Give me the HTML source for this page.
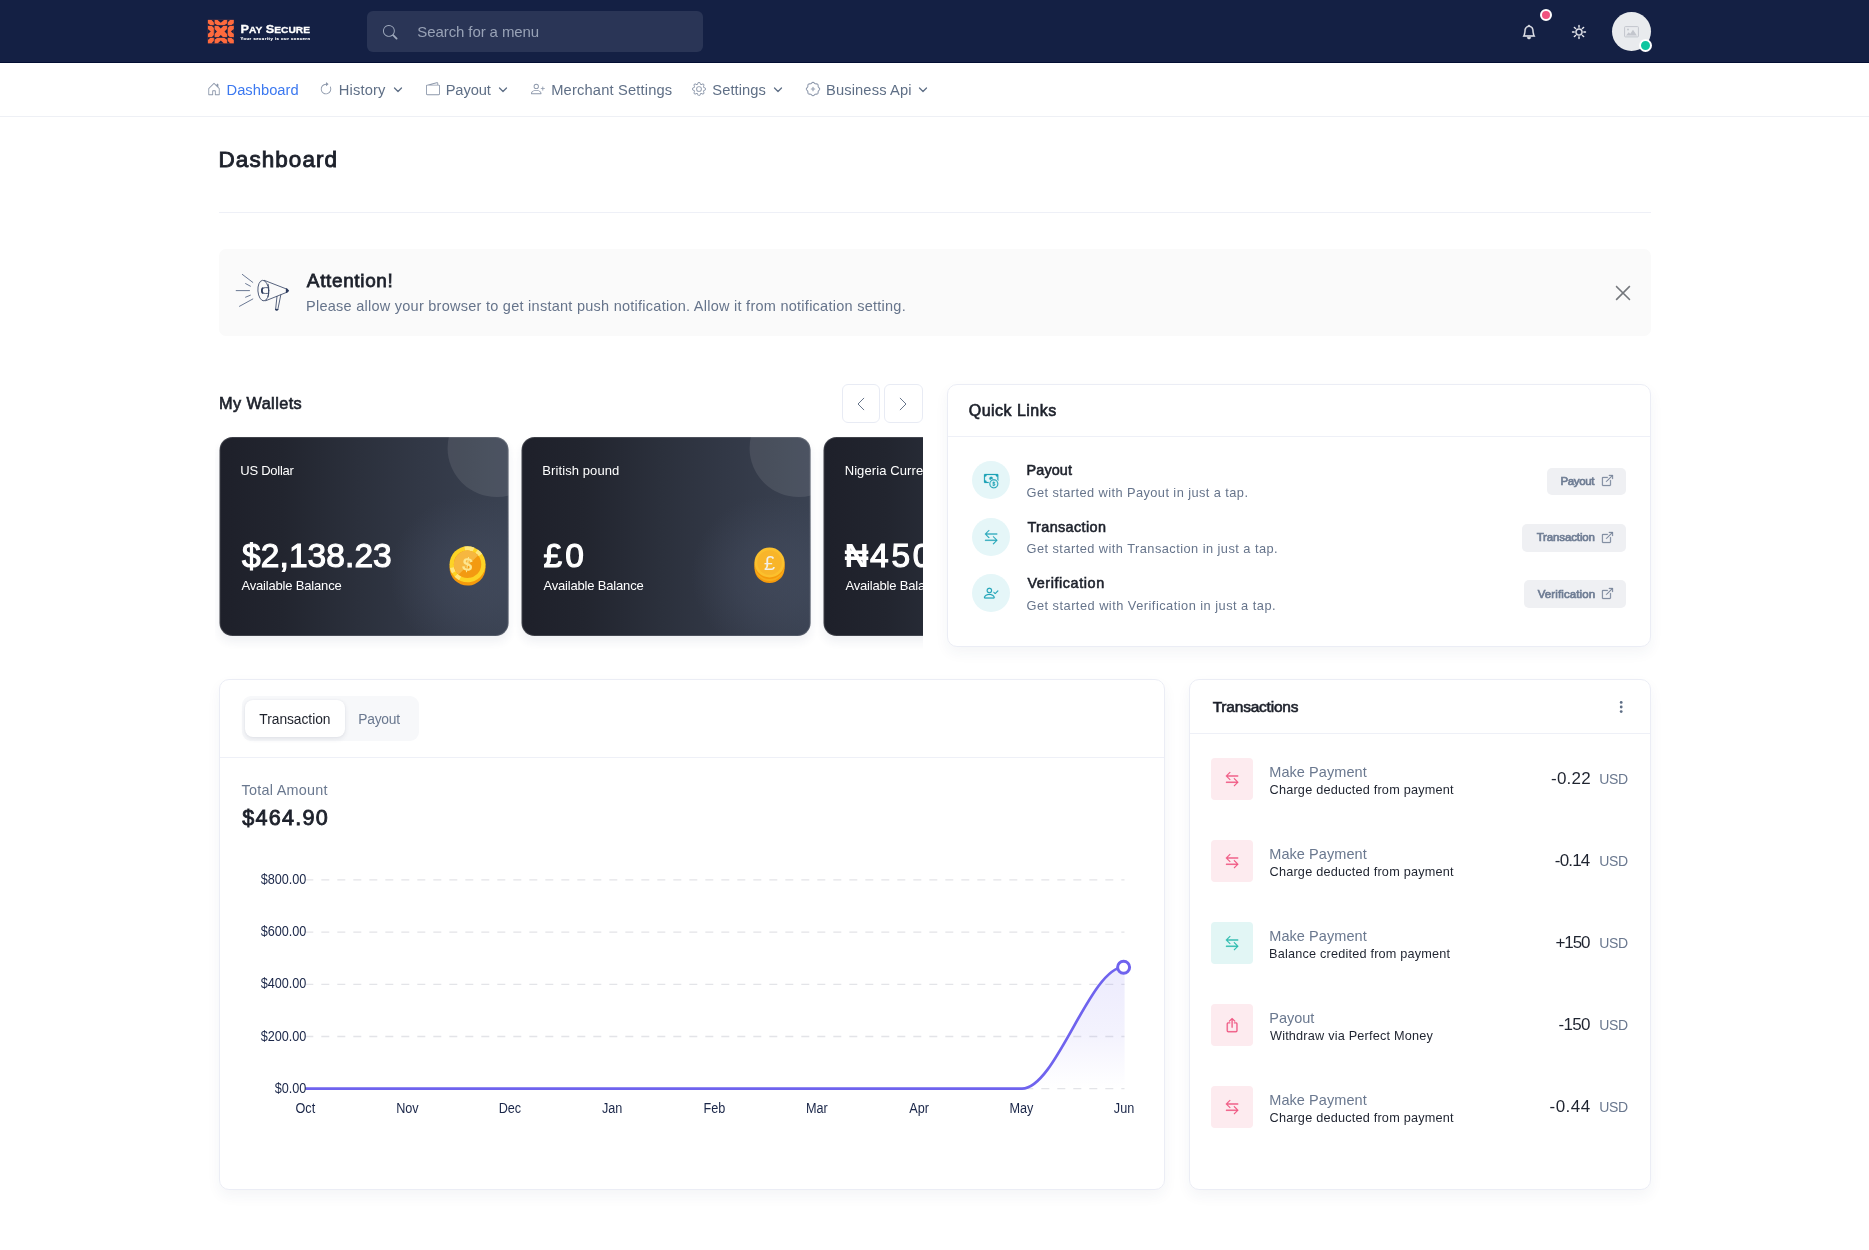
<!DOCTYPE html>
<html lang="en"><head>
<meta charset="utf-8">
<title>Dashboard - Pay Secure</title>
<style>
*{box-sizing:border-box;margin:0;padding:0}
html,body{width:1869px;height:1250px;overflow:hidden;background:#fff}
body{font-family:"Liberation Sans",sans-serif;color:#1f2430;position:relative;-webkit-font-smoothing:antialiased}
.abs,.t{position:absolute}
.t{white-space:nowrap;line-height:1;display:block}
svg{position:absolute;overflow:visible}
/* header */
#hdr{left:0;top:0;width:1869px;height:63px;background:#142044;border-bottom:1px solid #030e33}
#search{left:367px;top:11px;width:336px;height:41px;border-radius:6px;background:#2a3556}
/* nav */
#nav{left:0;top:63px;width:1869px;height:54px;background:#fff;border-bottom:1px solid #eef0f5}
.nv{font-size:14.7px;color:#5f6f86}
/* cards */
.card{background:#fff;border:1px solid #ebedf5;border-radius:10px;box-shadow:0 6px 14px rgba(40,50,100,.05)}
.hr{height:1px;background:#eef0f7}
.wal{transform:translateX(-.45px);width:289px;height:199px;border-radius:13px;overflow:hidden;box-shadow:inset 0 0 0 1px rgba(255,255,255,.14),0 6px 10px rgba(40,50,100,.07);
 background:linear-gradient(90deg,#1e202a 0%,#22252f 22%,#2b303c 48%,#323846 70%,#373e4d 88%,#3a4252 100%)}
.wal .glow{position:absolute;left:169px;top:58px;width:160px;height:160px;border-radius:50%;
 background:radial-gradient(circle,rgba(80,90,112,.36) 0%,rgba(80,90,112,.24) 32%,rgba(80,90,112,.0) 70%)}
.wal .circ{position:absolute;left:228px;top:-38px;width:98px;height:98px;border-radius:50%;background:rgba(255,255,255,.095)}
.wal .nm{left:21.1px;font-size:13px;color:#fff}
.wal .amt{left:21.8px;font-size:33.5px;font-weight:400;-webkit-text-stroke:.034em;color:#fff}
.wal .av{left:21.4px;font-size:13px;color:#fff}
.qi{width:38px;height:38.4px;border-radius:50%;background:#e5f6f8}
.qt{font-size:14.4px;font-weight:400;-webkit-text-stroke:.04em;color:#1d212b}
.qd{font-size:12.8px;color:#66748b}
.qb{height:27px;border-radius:5px;background:#eff0f3}
.qbt{font-size:11.5px;font-weight:400;-webkit-text-stroke:.06em;color:#6f7d94}
.ti{left:1211px;width:42px;height:42px;border-radius:4px;background:#fdebef}
.ti.g{background:#e2f6f5}
.tn{left:1269.8px;font-size:14.5px;color:#6a788f}
.td{left:1269.6px;font-size:12.7px;color:#1f2430}
.ta{font-size:17px;color:#1f2430}
.tu{left:1599.7px;font-size:14px;color:#6a788f}
</style>
</head>
<body>
<div id="root" style="position:absolute;left:0;top:0;width:1869px;height:1250px;will-change:transform">
<div class="abs" id="hdr"></div>
<svg style="left:204px;top:16px" width="36" height="32" viewBox="0 0 1406 1250">
 <rect x="150" y="150" width="1015" height="920" fill="#ff6a3d"></rect>
 <g fill="#142044">
  <rect x="385" y="150" width="28" height="920"></rect><rect x="897" y="150" width="28" height="920"></rect>
  <rect x="150" y="358" width="1015" height="30"></rect><rect x="150" y="820" width="1015" height="30"></rect>
  <polygon points="560,388 750,388 655,485"></polygon><polygon points="575,822 735,822 655,740"></polygon>
  <polygon points="411,510 411,700 505,605"></polygon><polygon points="899,510 899,700 800,605"></polygon>
  <polygon points="520,150 790,150 655,265"></polygon><polygon points="411,290 411,360 520,360"></polygon><polygon points="899,290 899,360 790,360"></polygon>
  <polygon points="530,1070 780,1070 655,955"></polygon><polygon points="411,930 411,850 520,850"></polygon><polygon points="899,930 899,850 790,850"></polygon>
  <polygon points="150,510 150,700 265,605"></polygon><polygon points="310,388 387,388 387,470"></polygon><polygon points="310,822 387,822 387,740"></polygon>
  <polygon points="1165,510 1165,700 1050,605"></polygon><polygon points="1000,388 923,388 923,470"></polygon><polygon points="1000,822 923,822 923,740"></polygon>
  <polygon points="290,150 387,150 387,250"></polygon><polygon points="150,280 150,360 250,360"></polygon>
  <polygon points="1025,150 923,150 923,250"></polygon><polygon points="1165,280 1165,360 1065,360"></polygon>
  <polygon points="290,1070 387,1070 387,970"></polygon><polygon points="150,940 150,850 250,850"></polygon>
  <polygon points="1025,1070 923,1070 923,970"></polygon><polygon points="1165,940 1165,850 1065,850"></polygon>
 </g>
</svg>
<svg style="left:238px;top:18px" width="80" height="28" viewBox="0 0 80 28">
 <text x="2.6" y="14.6" fill="#fff" stroke="#fff" stroke-width=".3" font-family="Liberation Sans, sans-serif" font-weight="700" font-size="11.6" textLength="69.4" lengthAdjust="spacingAndGlyphs">P<tspan font-size="9.3">AY</tspan> S<tspan font-size="9.3">ECURE</tspan></text>
 <text x="2.6" y="22.2" fill="#fff" stroke="#fff" stroke-width=".15" font-family="Liberation Sans, sans-serif" font-weight="700" font-size="4.1" textLength="69.4" lengthAdjust="spacing">Your security is our concern</text>
</svg>
<div class="abs" id="search"></div>
<svg style="left:383px;top:24.8px" width="14.500" height="14.500" viewBox="0 0 16 16" fill="#a0abbe"><path d="M11.742 10.344a6.500 6.500 0 1 0-1.397 1.398h-.001q.044.060.098.115l3.850 3.850a1 1 0 0 0 1.415-1.414l-3.850-3.850a1 1 0 0 0-.115-.100zM12 6.500a5.500 5.500 0 1 1-11 0 5.500 5.500 0 0 1 11 0"></path></svg>
<span class="t" style="left: 417.37px; font-size: 15px; color: rgb(152, 162, 182); letter-spacing: -0.103px; top: 24px;">Search for a menu</span>
<!-- bell -->
<svg style="left:1521.8px;top:25px" width="14" height="14" viewBox="0 0 16 16" fill="#f4f5f9" stroke="#f4f5f9" stroke-width=".55"><path d="M8 16a2 2 0 0 0 2-2H6a2 2 0 0 0 2 2M8 1.918l-.797.161A4 4 0 0 0 4 6c0 .628-.134 2.197-.459 3.742-.160.767-.376 1.566-.663 2.258h10.244c-.287-.692-.502-1.490-.663-2.258C12.134 8.197 12 6.628 12 6a4 4 0 0 0-3.203-3.920zM14.220 12c.223.447.481.801.780 1H1c.299-.199.557-.553.780-1C2.680 10.200 3 6.880 3 6c0-2.420 1.720-4.440 4.005-4.901a1 1 0 1 1 1.990 0A5 5 0 0 1 13 6c0 .880.320 4.200 1.220 6"></path></svg>
<div class="abs" style="left:1540px;top:9px;width:12px;height:12px;border-radius:50%;background:#f0527f;border:2px solid #fff"></div>
<!-- sun -->
<svg style="left:1571.9px;top:25px" width="14" height="14" viewBox="0 0 16 16" fill="#f4f5f9" stroke="#f4f5f9" stroke-width=".55"><path d="M8 11a3 3 0 1 1 0-6 3 3 0 0 1 0 6m0 1a4 4 0 1 0 0-8 4 4 0 0 0 0 8M8 0a.5.500 0 0 1 .5.500v2a.5.500 0 0 1-1 0v-2A.5.500 0 0 1 8 0m0 13a.5.500 0 0 1 .5.500v2a.5.500 0 0 1-1 0v-2A.5.500 0 0 1 8 13m8-5a.5.500 0 0 1-.5.500h-2a.5.500 0 0 1 0-1h2a.5.500 0 0 1 .5.500M3 8a.5.500 0 0 1-.5.500h-2a.5.500 0 0 1 0-1h2A.5.500 0 0 1 3 8m10.657-5.657a.5.500 0 0 1 0 .707l-1.414 1.415a.5.500 0 1 1-.707-.708l1.414-1.414a.5.500 0 0 1 .707 0m-9.193 9.193a.5.500 0 0 1 0 .707L3.050 13.657a.5.500 0 0 1-.707-.707l1.414-1.414a.5.500 0 0 1 .707 0m9.193 2.121a.5.500 0 0 1-.707 0l-1.414-1.414a.5.500 0 0 1 .707-.707l1.414 1.414a.5.500 0 0 1 0 .707M4.464 4.465a.5.500 0 0 1-.707 0L2.343 3.050a.5.500 0 1 1 .707-.707l1.414 1.414a.5.500 0 0 1 0 .708"></path></svg>
<!-- avatar -->
<div class="abs" style="left:1612px;top:12px;width:39px;height:39px;border-radius:50%;background:#e9ebee"></div>
<svg style="left:1624px;top:26px" width="15" height="12" viewBox="0 0 15 12"><rect x=".6" y=".6" width="13.800" height="10.300" rx=".8" fill="none" stroke="#c3c6cd" stroke-width="1"></rect><circle cx="4" cy="3.600" r="1" fill="#c3c6cd"></circle><path d="M2 9.600l2.700-3.400 1.500 1.500 2.800-4 3.900 5.900z" fill="#c3c6cd"></path></svg>
<div class="abs" style="left:1639px;top:39px;width:13px;height:13px;border-radius:50%;background:#0fc6a0;border:2px solid #fff"></div>

<div class="abs" id="nav"></div>
<!-- home -->
<svg style="left:206.5px;top:81.8px" width="14" height="14" viewBox="0 0 16 16" fill="#8d98ab"><path d="M8.354 1.146a.5.500 0 0 0-.708 0l-6 6A.5.500 0 0 0 1.500 7.500v7a.5.500 0 0 0 .5.500h4.500a.5.500 0 0 0 .5-.5v-4h2v4a.5.500 0 0 0 .5.500H14a.5.500 0 0 0 .5-.5v-7a.5.500 0 0 0-.146-.354L13 5.793V2.500a.5.500 0 0 0-.5-.5h-1a.5.500 0 0 0-.5.500v1.293L8.354 1.146zM2.500 14V7.707l5.500-5.500 5.500 5.500V14H10v-4a.5.500 0 0 0-.5-.5h-3a.5.500 0 0 0-.5.500v4H2.500z"></path></svg>
<span class="t nv" style="left: 226.5px; font-size: 14.7px; color: rgb(59, 120, 240); letter-spacing: 0.04px; top: 83px;">Dashboard</span>
<!-- history -->
<svg style="left:318.6px;top:81.8px" width="14" height="14" viewBox="0 0 16 16" fill="#8d98ab"><path fill-rule="evenodd" d="M8 3a5 5 0 1 0 4.546 2.914.5.500 0 0 1 .908-.417A6 6 0 1 1 8 2z"></path><path d="M8 4.466V.534a.25.250 0 0 1 .41-.192l2.360 1.966c.120.100.120.284 0 .384L8.410 4.658A.25.250 0 0 1 8 4.466"></path></svg>
<span class="t nv" style="left: 338.72px; letter-spacing: 0.165px; top: 83px;">History</span>
<svg style="left:393px;top:85.800px" width="10" height="8" viewBox="0 0 10 8" fill="none" stroke="#5f6f86" stroke-width="1.300" stroke-linecap="round" stroke-linejoin="round"><path d="M1.500 2l3.500 3.500L8.500 2"></path></svg>
<!-- payout -->
<svg style="left:425.9px;top:81.8px" width="14" height="14" viewBox="0 0 16 16" fill="#8d98ab"><path d="M12.136.326A1.500 1.500 0 0 1 14 1.780V3h.5A1.500 1.500 0 0 1 16 4.500v9a1.500 1.500 0 0 1-1.500 1.500h-13A1.500 1.500 0 0 1 0 13.500v-9a1.500 1.500 0 0 1 1.432-1.499L12.136.326zM5.562 3H13V1.780a.5.500 0 0 0-.621-.484L5.562 3zM1.500 4a.5.500 0 0 0-.5.500v9a.5.500 0 0 0 .5.500h13a.5.500 0 0 0 .5-.5v-9a.5.500 0 0 0-.5-.5h-13z"></path></svg>
<span class="t nv" style="left: 445.64px; letter-spacing: -0.096px; top: 83px;">Payout</span>
<svg style="left:498px;top:85.800px" width="10" height="8" viewBox="0 0 10 8" fill="none" stroke="#5f6f86" stroke-width="1.300" stroke-linecap="round" stroke-linejoin="round"><path d="M1.500 2l3.500 3.500L8.500 2"></path></svg>
<!-- merchant -->
<svg style="left:531.2px;top:81.8px" width="14" height="14" viewBox="0 0 16 16" fill="#8d98ab"><path d="M6 8a3 3 0 1 0 0-6 3 3 0 0 0 0 6m2-3a2 2 0 1 1-4 0 2 2 0 0 1 4 0m4 8c0 1-1 1-1 1H1s-1 0-1-1 1-4 6-4 6 3 6 4m-1-.004c-.001-.246-.154-.986-.832-1.664C9.516 10.680 8.289 10 6 10s-3.516.680-4.168 1.332c-.678.678-.830 1.418-.832 1.664z"></path><path fill-rule="evenodd" d="M13.500 5a.5.500 0 0 1 .5.500V7h1.500a.5.500 0 0 1 0 1H14v1.500a.5.500 0 0 1-1 0V8h-1.500a.5.500 0 0 1 0-1H13V5.500a.5.500 0 0 1 .5-.5"></path></svg>
<span class="t nv" style="left: 551.22px; letter-spacing: 0.159px; top: 83px;">Merchant Settings</span>
<!-- settings gear -->
<svg style="left:691.9px;top:81.8px" width="14" height="14" viewBox="0 0 16 16" fill="#8d98ab"><path d="M8 4.754a3.246 3.246 0 1 0 0 6.492 3.246 3.246 0 0 0 0-6.492M5.754 8a2.246 2.246 0 1 1 4.492 0 2.246 2.246 0 0 1-4.492 0"></path><path d="M9.796 1.343c-.527-1.790-3.065-1.790-3.592 0l-.094.319a.873.873 0 0 1-1.255.520l-.292-.160c-1.640-.892-3.433.902-2.540 2.541l.159.292a.873.873 0 0 1-.52 1.255l-.319.094c-1.790.527-1.790 3.065 0 3.592l.319.094a.873.873 0 0 1 .52 1.255l-.16.292c-.892 1.640.901 3.434 2.541 2.540l.292-.159a.873.873 0 0 1 1.255.520l.094.319c.527 1.790 3.065 1.790 3.592 0l.094-.319a.873.873 0 0 1 1.255-.520l.292.160c1.640.893 3.434-.902 2.540-2.541l-.159-.292a.873.873 0 0 1 .520-1.255l.319-.094c1.790-.527 1.790-3.065 0-3.592l-.319-.094a.873.873 0 0 1-.520-1.255l.160-.292c.893-1.640-.902-3.433-2.541-2.540l-.292.159a.873.873 0 0 1-1.255-.520zm-2.633.283c.246-.835 1.428-.835 1.674 0l.094.319a1.873 1.873 0 0 0 2.693 1.115l.291-.160c.764-.415 1.600.420 1.184 1.185l-.159.292a1.873 1.873 0 0 0 1.116 2.692l.318.094c.835.246.835 1.428 0 1.674l-.319.094a1.873 1.873 0 0 0-1.115 2.693l.160.291c.415.764-.420 1.600-1.185 1.184l-.291-.159a1.873 1.873 0 0 0-2.693 1.116l-.094.318c-.246.835-1.428.835-1.674 0l-.094-.319a1.873 1.873 0 0 0-2.692-1.115l-.292.160c-.764.415-1.600-.420-1.184-1.185l.159-.291A1.873 1.873 0 0 0 1.945 8.930l-.319-.094c-.835-.246-.835-1.428 0-1.674l.319-.094A1.873 1.873 0 0 0 3.060 4.377l-.160-.292c-.415-.764.420-1.600 1.185-1.184l.292.159a1.873 1.873 0 0 0 2.692-1.115z"></path></svg>
<span class="t nv" style="left: 712.29px; letter-spacing: 0.082px; top: 83px;">Settings</span>
<svg style="left:773px;top:85.800px" width="10" height="8" viewBox="0 0 10 8" fill="none" stroke="#5f6f86" stroke-width="1.300" stroke-linecap="round" stroke-linejoin="round"><path d="M1.500 2l3.500 3.500L8.500 2"></path></svg>
<!-- business api -->
<svg style="left:806.0px;top:81.8px" width="14" height="14" viewBox="0 0 16 16" fill="#8d98ab"><path d="M8.00 0.40L8.30 0.43L8.59 0.53L8.87 0.68L9.13 0.87L9.38 1.09L9.61 1.31L9.83 1.53L10.04 1.72L10.26 1.88L10.49 1.99L10.73 2.07L11.00 2.11L11.29 2.13L11.59 2.13L11.92 2.14L12.24 2.16L12.56 2.21L12.87 2.30L13.14 2.44L13.37 2.63L13.56 2.86L13.70 3.13L13.79 3.44L13.84 3.76L13.86 4.08L13.87 4.41L13.87 4.71L13.89 5.00L13.93 5.27L14.01 5.51L14.12 5.74L14.28 5.96L14.47 6.17L14.69 6.39L14.91 6.62L15.13 6.87L15.32 7.13L15.47 7.41L15.57 7.70L15.60 8.00L15.57 8.30L15.47 8.59L15.32 8.87L15.13 9.13L14.91 9.38L14.69 9.61L14.47 9.83L14.28 10.04L14.12 10.26L14.01 10.49L13.93 10.73L13.89 11.00L13.87 11.29L13.87 11.59L13.86 11.92L13.84 12.24L13.79 12.56L13.70 12.87L13.56 13.14L13.37 13.37L13.14 13.56L12.87 13.70L12.56 13.79L12.24 13.84L11.92 13.86L11.59 13.87L11.29 13.87L11.00 13.89L10.73 13.93L10.49 14.01L10.26 14.12L10.04 14.28L9.83 14.47L9.61 14.69L9.38 14.91L9.13 15.13L8.87 15.32L8.59 15.47L8.30 15.57L8.00 15.60L7.70 15.57L7.41 15.47L7.13 15.32L6.87 15.13L6.62 14.91L6.39 14.69L6.17 14.47L5.96 14.28L5.74 14.12L5.51 14.01L5.27 13.93L5.00 13.89L4.71 13.87L4.41 13.87L4.08 13.86L3.76 13.84L3.44 13.79L3.13 13.70L2.86 13.56L2.63 13.37L2.44 13.14L2.30 12.87L2.21 12.56L2.16 12.24L2.14 11.92L2.13 11.59L2.13 11.29L2.11 11.00L2.07 10.73L1.99 10.49L1.88 10.26L1.72 10.04L1.53 9.83L1.31 9.61L1.09 9.38L0.87 9.13L0.68 8.87L0.53 8.59L0.43 8.30L0.40 8.00L0.43 7.70L0.53 7.41L0.68 7.13L0.87 6.87L1.09 6.62L1.31 6.39L1.53 6.17L1.72 5.96L1.88 5.74L1.99 5.51L2.07 5.27L2.11 5.00L2.13 4.71L2.13 4.41L2.14 4.08L2.16 3.76L2.21 3.44L2.30 3.13L2.44 2.86L2.63 2.63L2.86 2.44L3.13 2.30L3.44 2.21L3.76 2.16L4.08 2.14L4.41 2.13L4.71 2.13L5.00 2.11L5.27 2.07L5.51 1.99L5.74 1.88L5.96 1.72L6.17 1.53L6.39 1.31L6.62 1.09L6.87 0.87L7.13 0.68L7.41 0.53L7.70 0.43Z" fill="none" stroke="#8d98ab" stroke-width="1.200"></path><path d="M8 6.100v3.800M6.100 8h3.800" stroke="#9aa4b5" stroke-width="1.400" stroke-linecap="round"></path></svg>
<span class="t nv" style="left: 825.99px; letter-spacing: 0.128px; top: 83px;">Business Api</span>
<svg style="left:918px;top:85.800px" width="10" height="8" viewBox="0 0 10 8" fill="none" stroke="#5f6f86" stroke-width="1.300" stroke-linecap="round" stroke-linejoin="round"><path d="M1.500 2l3.500 3.500L8.500 2"></path></svg>

<span class="t" style="left: 218.54px; font-size: 22.5px; font-weight: 400; -webkit-text-stroke: 0.04em; color: rgb(29, 33, 43); letter-spacing: 1.05px; top: 149px;">Dashboard</span>
<div class="abs hr" style="left:219px;top:212px;width:1432px;background:#eef0f7"></div>

<div class="abs" style="left:219px;top:249px;width:1432px;height:87px;border-radius:7px;background:#fafafa"></div>
<svg style="left:232px;top:270px" width="62" height="44" viewBox="0 0 62 44" fill="none" stroke="#2d3c5e" stroke-width=".8" stroke-linecap="round" stroke-linejoin="round">
 <g stroke="#5a6a88" stroke-width=".9"><path d="M10.300 4.400L20.800 12.400M13.600 13.600L18.400 16.200M4.200 20.600H17.500M13.600 27.200L18.400 25.200M7.500 36.300L20.800 29"></path></g>
 <ellipse cx="31.300" cy="20.600" rx="5.400" ry="10.300" transform="rotate(-4 31.300 20.600)"></ellipse>
 <path d="M32.400 10.400L55 19.200M33.800 30.700L55 22.200"></path>
 <path d="M54.600 19.100l1.700 1.600-1.700 1.600z" fill="#2d3c5e" stroke-width="1.500"></path>
 <path d="M45 26.400L43.600 39.500M48.800 24.900L45.800 39.600"></path>
 <path d="M43.600 39.300c.4 1.200 1.700 1.200 2.200 .2z" fill="#2d3c5e" stroke-width="1.200"></path>
 <path d="M36.300 17.700c-1.600-.2-4-.2-5.500 .4-1.300 .6-1.300 4.300 0 4.900 1.500 .6 3.900 .6 5.500 .3"></path>
 <path d="M30.600 18.200c-1 .7-1 4 0 4.700" stroke-width="1.800"></path>
 <path d="M36.200 14.300c.9 3.900 .9 8.600-.1 12.700"></path>
</svg>
<span class="t" style="left: 306.84px; font-size: 19px; font-weight: 400; -webkit-text-stroke: 0.04em; color: rgb(29, 33, 43); letter-spacing: 0.634px; top: 271px;">Attention!</span>
<span class="t" style="left: 305.99px; font-size: 14.5px; color: rgb(102, 116, 139); letter-spacing: 0.258px; top: 299px;">Please allow your browser to get instant push notification. Allow it from notification setting.</span>
<svg style="left:1615px;top:285px" width="16" height="16" viewBox="0 0 16 16" fill="none" stroke="#73767b" stroke-width="1.600" stroke-linecap="square"><path d="M1.700 1.700l12.600 12.600M14.300 1.700l-12.600 12.600"></path></svg>

<span class="t" style="left: 218.95px; font-size: 16.3px; font-weight: 400; -webkit-text-stroke: 0.04em; color: rgb(29, 33, 43); letter-spacing: 0.425px; top: 395px;">My Wallets</span>
<div class="abs" style="left:842px;top:384px;width:38px;height:39px;border:1px solid #e8ebf4;border-radius:6px;background:#fff"></div>
<div class="abs" style="left:884px;top:384px;width:39px;height:39px;border:1px solid #e8ebf4;border-radius:6px;background:#fff"></div>
<svg style="left:855px;top:396px" width="12" height="16" viewBox="0 0 12 16" fill="none" stroke="#66748a" stroke-width="1" stroke-linecap="round" stroke-linejoin="round"><path d="M8.800 2.200L3 8l5.800 5.800"></path></svg>
<svg style="left:897px;top:396px" width="12" height="16" viewBox="0 0 12 16" fill="none" stroke="#66748a" stroke-width="1" stroke-linecap="round" stroke-linejoin="round"><path d="M3.200 2.200L9 8l-5.800 5.800"></path></svg>
<div class="abs" id="wwrap" style="left:215px;top:430px;width:708px;height:222px;overflow:hidden">
 <div class="abs wal" style="left:5px;top:7px">
  <div class="glow"></div><div class="circ"></div>
  <span class="t nm" style="letter-spacing: -0.256px; top: 27px; left: 20.74px;">US Dollar</span>
  <span class="t amt" style="letter-spacing: 0.08px; top: 102px; left: 22.52px;">$2,138.23</span>
  <span class="t av" style="letter-spacing: -0.173px; top: 142px; left: 21.83px;">Available Balance</span>
  <svg class="coin" style="left:229px;top:108px" width="38" height="42" viewBox="0 0 38 42">
   <ellipse cx="19" cy="22.600" rx="18" ry="18" fill="#f59a0c"></ellipse>
   <circle cx="19" cy="19.300" r="18" fill="#fdd325"></circle>
   <path d="M16.25 3.69A15.85 15.85 0 0 1 24.94 4.60M28.09 6.32A15.85 15.85 0 0 1 31.82 9.98M5.27 27.23A15.85 15.85 0 0 1 3.50 22.60M11.56 33.29A15.85 15.85 0 0 1 7.60 30.31" fill="none" stroke="#fee98d" stroke-width="4.300" opacity=".85"></path>
   <circle cx="19" cy="19.300" r="13.700" fill="#f39a11"></circle>
   <path d="M19 5.600A13.700 13.700 0 0 0 10 29.600L29.500 10.500A13.700 13.700 0 0 0 19 5.600z" fill="#f6b740"></path>
   <text x="19" y="25.800" text-anchor="middle" font-family="Liberation Sans, sans-serif" font-weight="700" font-size="18.500" fill="#fde68f" transform="rotate(8 19 19.300)">$</text>
  </svg>
 </div>
 <div class="abs wal" style="left:307px;top:7px">
  <div class="glow"></div><div class="circ"></div>
  <span class="t nm" style="letter-spacing: 0.095px; top: 27px; left: 20.75px;">British pound</span>
  <span class="t amt" style="letter-spacing: 3.14px; top: 102px; left: 22.06px;">£0</span>
  <span class="t av" style="letter-spacing: -0.173px; top: 142px; left: 21.83px;">Available Balance</span>
  <svg class="coin" style="left:232px;top:110px" width="32" height="38" viewBox="0 0 32 38">
   <ellipse cx="16" cy="21.500" rx="15" ry="14.500" fill="#f59a0c"></ellipse>
   <ellipse cx="16" cy="19.500" rx="15" ry="14.500" fill="#f8ae1b"></ellipse>
   <ellipse cx="16" cy="17.500" rx="15" ry="14.500" fill="#f59a0c"></ellipse>
   <circle cx="16" cy="15.500" r="15" fill="#fbc02d"></circle>
   <circle cx="16" cy="15.500" r="12.300" fill="#f8b52a"></circle>
   <text x="16" y="23" text-anchor="middle" font-family="Liberation Sans, sans-serif" font-weight="400" font-size="20" fill="#f3efe6">£</text>
  </svg>
 </div>
 <div class="abs wal" style="left:609px;top:7px">
  <div class="glow"></div><div class="circ"></div>
  <span class="t nm" style="letter-spacing: 0.1px; top: 27px;">Nigeria Currency</span>
  <span class="t amt" style="left: 21px; letter-spacing: 2.8px; top: 102px;"><span style="font-family:'Liberation Sans','DejaVu Sans',sans-serif;font-weight:700;letter-spacing:1.2px;-webkit-text-stroke:0">₦</span>4500.00</span>
  <span class="t av" style="letter-spacing: -0.173px; top: 142px; left: 21.83px;">Available Balance</span>
 </div>
</div>

<div class="abs card" style="left:947px;top:384px;width:704px;height:263px"></div>
<span class="t" style="left: 968.84px; font-size: 16px; font-weight: 400; -webkit-text-stroke: 0.04em; color: rgb(29, 33, 43); letter-spacing: 0.462px; top: 403px;">Quick Links</span>
<div class="abs hr" style="left:948px;top:436px;width:702px"></div>
<!-- row 1 -->
<div class="abs qi" style="left:972px;top:461px"></div>
<svg style="left:983.6px;top:473.8px" width="14.3" height="14.3" viewBox="0 0 16 16" fill="#1ea3b7" stroke="#1ea3b7" stroke-width=".25"><path fill-rule="evenodd" d="M11 15a4 4 0 1 0 0-8 4 4 0 0 0 0 8m5-4a5 5 0 1 1-10 0 5 5 0 0 1 10 0"></path><path d="M9.438 11.944c.047.596.518 1.060 1.363 1.116v.440h.375v-.443c.875-.061 1.386-.529 1.386-1.207 0-.618-.390-.936-1.090-1.100l-.296-.070v-1.200c.376.043.614.248.671.532h.658c-.047-.575-.540-1.024-1.329-1.073V8.500h-.375v.450c-.747.073-1.255.522-1.255 1.158 0 .562.378.920 1.007 1.066l.248.061v1.272c-.384-.058-.639-.270-.696-.563h-.668zm1.360-1.354c-.369-.085-.569-.260-.569-.522 0-.294.216-.514.572-.578v1.100zm.432.746c.449.104.655.272.655.569 0 .339-.257.571-.709.614v-1.195z"></path><path d="M1 0a1 1 0 0 0-1 1v8a1 1 0 0 0 1 1h4.083q.088-.517.258-1H3a2 2 0 0 0-2-2V3a2 2 0 0 0 2-2h10a2 2 0 0 0 2 2v3.528c.380.340.717.728 1 1.154V1a1 1 0 0 0-1-1z"></path><path d="M9.998 5.083 10 5a2 2 0 1 0-3.132 1.650 6 6 0 0 1 3.130-1.567"></path></svg>
<span class="t qt" style="left: 1026.55px; letter-spacing: 0.118px; top: 463px;">Payout</span>
<span class="t qd" style="left: 1026.5px; letter-spacing: 0.429px; top: 487px;">Get started with Payout in just a tap.</span>
<div class="abs qb" style="left:1547px;top:468px;width:79px"></div>
<span class="t qbt" style="left: 1560.62px; letter-spacing: -0.405px; top: 476px;">Payout</span>
<svg class="ext" style="left:1602.1px;top:474.9px" width="10.9" height="10.9" viewBox="0 0 16 16" fill="#6f7d94" stroke="#6f7d94" stroke-width=".45"><path fill-rule="evenodd" d="M8.636 3.500a.5.500 0 0 0-.5-.5H1.500A1.500 1.500 0 0 0 0 4.500v10A1.500 1.500 0 0 0 1.500 16h10a1.500 1.500 0 0 0 1.500-1.500V7.864a.5.500 0 0 0-1 0V14.500a.5.500 0 0 1-.5.500h-10a.5.500 0 0 1-.5-.5v-10a.5.500 0 0 1 .5-.5h6.636a.5.500 0 0 0 .5-.5z"></path><path fill-rule="evenodd" d="M16 .5a.5.500 0 0 0-.5-.5h-5a.5.500 0 0 0 0 1h3.793L6.146 9.146a.5.500 0 1 0 .708.708L15 1.707V5.500a.5.500 0 0 0 1 0v-5z"></path></svg>
<!-- row 2 -->
<div class="abs qi" style="left:972px;top:518px"></div>
<svg style="left:983.7px;top:529.9px" width="14.3" height="14.3" viewBox="0 0 16 16" fill="#1ea3b7" stroke="#1ea3b7" stroke-width=".25"><path fill-rule="evenodd" d="M1 11.500a.5.500 0 0 0 .5.500h11.793l-3.147 3.146a.5.500 0 0 0 .708.708l4-4a.5.500 0 0 0 0-.708l-4-4a.5.500 0 0 0-.708.708L13.293 11H1.500a.5.500 0 0 0-.5.500m14-7a.5.500 0 0 1-.5.500H2.707l3.147 3.146a.5.500 0 1 1-.708.708l-4-4a.5.500 0 0 1 0-.708l4-4a.5.500 0 1 1 .708.708L2.707 4H14.500a.5.500 0 0 1 .5.500"></path></svg>
<span class="t qt" style="left: 1027.42px; letter-spacing: 0.391px; top: 520px;">Transaction</span>
<span class="t qd" style="left: 1026.5px; letter-spacing: 0.458px; top: 543px;">Get started with Transaction in just a tap.</span>
<div class="abs qb" style="left:1522px;top:524px;width:104px;height:28px"></div>
<span class="t qbt" style="left: 1536.66px; letter-spacing: -0.133px; top: 532px;">Transaction</span>
<svg class="ext" style="left:1602.1px;top:531.9px" width="10.9" height="10.9" viewBox="0 0 16 16" fill="#6f7d94" stroke="#6f7d94" stroke-width=".45"><path fill-rule="evenodd" d="M8.636 3.500a.5.500 0 0 0-.5-.5H1.500A1.500 1.500 0 0 0 0 4.500v10A1.500 1.500 0 0 0 1.500 16h10a1.500 1.500 0 0 0 1.500-1.500V7.864a.5.500 0 0 0-1 0V14.500a.5.500 0 0 1-.5.500h-10a.5.500 0 0 1-.5-.5v-10a.5.500 0 0 1 .5-.5h6.636a.5.500 0 0 0 .5-.5z"></path><path fill-rule="evenodd" d="M16 .5a.5.500 0 0 0-.5-.5h-5a.5.500 0 0 0 0 1h3.793L6.146 9.146a.5.500 0 1 0 .708.708L15 1.707V5.500a.5.500 0 0 0 1 0v-5z"></path></svg>
<!-- row 3 -->
<div class="abs qi" style="left:972px;top:574px"></div>
<svg style="left:983.6px;top:585.6px" width="14.3" height="14.3" viewBox="0 0 16 16" fill="#1ea3b7" stroke="#1ea3b7" stroke-width=".25"><path d="M6 8a3 3 0 1 0 0-6 3 3 0 0 0 0 6zm2-3a2 2 0 1 1-4 0 2 2 0 0 1 4 0zm4 8c0 1-1 1-1 1H1s-1 0-1-1 1-4 6-4 6 3 6 4zm-1-.004c-.001-.246-.154-.986-.832-1.664C9.516 10.680 8.289 10 6 10c-2.290 0-3.516.680-4.168 1.332-.678.678-.830 1.418-.832 1.664h10z"></path><path fill-rule="evenodd" d="M15.854 5.146a.5.500 0 0 1 0 .708l-3 3a.5.500 0 0 1-.708 0l-1.500-1.500a.5.500 0 0 1 .708-.708L12.500 7.793l2.646-2.647a.5.500 0 0 1 .708 0z"></path></svg>
<span class="t qt" style="left: 1027.38px; letter-spacing: 0.579px; top: 576px;">Verification</span>
<span class="t qd" style="left: 1026.5px; letter-spacing: 0.482px; top: 600px;">Get started with Verification in just a tap.</span>
<div class="abs qb" style="left:1524px;top:580px;width:102px;height:28px"></div>
<span class="t qbt" style="left: 1537.72px; letter-spacing: 0.104px; top: 589px;">Verification</span>
<svg class="ext" style="left:1602.1px;top:587.9px" width="10.9" height="10.9" viewBox="0 0 16 16" fill="#6f7d94" stroke="#6f7d94" stroke-width=".45"><path fill-rule="evenodd" d="M8.636 3.500a.5.500 0 0 0-.5-.5H1.500A1.500 1.500 0 0 0 0 4.500v10A1.500 1.500 0 0 0 1.500 16h10a1.500 1.500 0 0 0 1.500-1.500V7.864a.5.500 0 0 0-1 0V14.500a.5.500 0 0 1-.5.500h-10a.5.500 0 0 1-.5-.5v-10a.5.500 0 0 1 .5-.5h6.636a.5.500 0 0 0 .5-.5z"></path><path fill-rule="evenodd" d="M16 .5a.5.500 0 0 0-.5-.5h-5a.5.500 0 0 0 0 1h3.793L6.146 9.146a.5.500 0 1 0 .708.708L15 1.707V5.500a.5.500 0 0 0 1 0v-5z"></path></svg>

<div class="abs card" style="left:219px;top:679px;width:946px;height:511px"></div>
<div class="abs" style="left:241.500px;top:696px;width:177.500px;height:45px;border-radius:9px;background:#f7f8fa"></div>
<div class="abs" style="left:245px;top:700px;width:100px;height:36.500px;border-radius:8px;background:#fff;box-shadow:0 2px 5px rgba(40,50,80,.10),0 0 2px rgba(40,50,80,.06)"></div>
<span class="t" style="left: 259.32px; font-size: 13.8px; color: rgb(29, 33, 43); letter-spacing: -0.039px; top: 713px;">Transaction</span>
<span class="t" style="left: 358.3px; font-size: 13.8px; color: rgb(106, 120, 143); letter-spacing: -0.232px; top: 713px;">Payout</span>
<div class="abs hr" style="left:220px;top:757px;width:944px"></div>
<span class="t" style="left: 241.51px; font-size: 14.4px; color: rgb(106, 120, 143); letter-spacing: 0.258px; top: 783px;">Total Amount</span>
<span class="t" style="left: 242.33px; font-size: 21.6px; font-weight: 400; -webkit-text-stroke: 0.04em; color: rgb(29, 33, 43); letter-spacing: 1.229px; top: 807px;">$464.90</span>
<svg style="left:220px;top:860px" width="944" height="270" viewBox="220 860 944 270">
 <defs><linearGradient id="ag" x1="0" y1="967" x2="0" y2="1088" gradientUnits="userSpaceOnUse"><stop offset="0" stop-color="#6f63ee" stop-opacity=".13"></stop><stop offset=".55" stop-color="#6f63ee" stop-opacity=".08"></stop><stop offset="1" stop-color="#6f63ee" stop-opacity="0"></stop></linearGradient></defs>
 <g stroke="#e3e4e8" stroke-width="1.300" stroke-dasharray="8 8" fill="none">
  <path d="M305.300 879.900H1124.500M305.300 932.100H1124.500M305.300 984.300H1124.500M305.300 1036.500H1124.500M305.300 1088.700H1124.500"></path>
 </g>
 <path d="M1022 1088.600C1056 1088.600 1090 967 1124 967h.6V1088.600Z" fill="url(#ag)"></path>
 <path d="M305.300 1088.600H1022C1056 1088.600 1090 967 1124 967" fill="none" stroke="#6f63ee" stroke-width="2.700" stroke-linecap="butt"></path>
 <circle cx="1123.600" cy="967.200" r="6" fill="#fff" stroke="#6f63ee" stroke-width="3"></circle>
 <g font-family="Liberation Sans, sans-serif" font-size="14" fill="#1b2749">
<text transform="translate(306.4 883.9) scale(.905 1)" text-anchor="end">$800.00</text><text transform="translate(306.4 936.1) scale(.905 1)" text-anchor="end">$600.00</text><text transform="translate(306.4 988.3) scale(.905 1)" text-anchor="end">$400.00</text><text transform="translate(306.4 1040.5) scale(.905 1)" text-anchor="end">$200.00</text><text transform="translate(306.4 1092.7) scale(.905 1)" text-anchor="end">$0.00</text>
<text transform="translate(305.3 1113) scale(.905 1)" text-anchor="middle">Oct</text><text transform="translate(407.4 1113) scale(.905 1)" text-anchor="middle">Nov</text><text transform="translate(509.9 1113) scale(.905 1)" text-anchor="middle">Dec</text><text transform="translate(612.1 1113) scale(.905 1)" text-anchor="middle">Jan</text><text transform="translate(714.5 1113) scale(.905 1)" text-anchor="middle">Feb</text><text transform="translate(816.8 1113) scale(.905 1)" text-anchor="middle">Mar</text><text transform="translate(919.2 1113) scale(.905 1)" text-anchor="middle">Apr</text><text transform="translate(1021.5 1113) scale(.905 1)" text-anchor="middle">May</text><text transform="translate(1124.0 1113) scale(.905 1)" text-anchor="middle">Jun</text>
</g>
</svg>

<div class="abs card" style="left:1189px;top:679px;width:462px;height:511px"></div>
<span class="t" style="left: 1212.68px; font-size: 15.5px; font-weight: 400; -webkit-text-stroke: 0.04em; color: rgb(29, 33, 43); letter-spacing: -0.209px; top: 699px;">Transactions</span>
<svg style="left:1618px;top:700px" width="6" height="14" viewBox="0 0 6 14" fill="#5f6f86"><circle cx="3.200" cy="2.400" r="1.400"></circle><circle cx="3.200" cy="7" r="1.400"></circle><circle cx="3.200" cy="11.600" r="1.400"></circle></svg>
<div class="abs hr" style="left:1190px;top:733px;width:460px"></div>
<div class="abs ti" style="top:758px"></div>
<svg style="left:1225.1px;top:771.8px" width="14.2" height="14.2" viewBox="0 0 16 16" fill="#ef4f7c" stroke="#ef4f7c" stroke-width=".35"><path fill-rule="evenodd" d="M1 11.500a.5.500 0 0 0 .5.500h11.793l-3.147 3.146a.5.500 0 0 0 .708.708l4-4a.5.500 0 0 0 0-.708l-4-4a.5.500 0 0 0-.708.708L13.293 11H1.500a.5.500 0 0 0-.5.500m14-7a.5.500 0 0 1-.5.500H2.707l3.147 3.146a.5.500 0 1 1-.708.708l-4-4a.5.500 0 0 1 0-.708l4-4a.5.500 0 1 1 .708.708L2.707 4H14.500a.5.500 0 0 1 .5.500"></path></svg>
<span class="t tn" style="letter-spacing: 0.064px; top: 765px; left: 1269.25px;">Make Payment</span>
<span class="t td" style="letter-spacing: 0.206px; top: 784px; left: 1269.56px;">Charge deducted from payment</span>
<span class="t ta" style="letter-spacing: 0.204px; left: 1551.1px; top: 770px;">-0.22</span>
<span class="t tu" style="letter-spacing: -0.29px; top: 772px; left: 1599.22px;">USD</span>
<div class="abs ti" style="top:840px"></div>
<svg style="left:1225.1px;top:853.8px" width="14.2" height="14.2" viewBox="0 0 16 16" fill="#ef4f7c" stroke="#ef4f7c" stroke-width=".35"><path fill-rule="evenodd" d="M1 11.500a.5.500 0 0 0 .5.500h11.793l-3.147 3.146a.5.500 0 0 0 .708.708l4-4a.5.500 0 0 0 0-.708l-4-4a.5.500 0 0 0-.708.708L13.293 11H1.500a.5.500 0 0 0-.5.500m14-7a.5.500 0 0 1-.5.500H2.707l3.147 3.146a.5.500 0 1 1-.708.708l-4-4a.5.500 0 0 1 0-.708l4-4a.5.500 0 1 1 .708.708L2.707 4H14.500a.5.500 0 0 1 .5.500"></path></svg>
<span class="t tn" style="letter-spacing: 0.064px; top: 847px; left: 1269.25px;">Make Payment</span>
<span class="t td" style="letter-spacing: 0.206px; top: 866px; left: 1269.56px;">Charge deducted from payment</span>
<span class="t ta" style="letter-spacing: -0.837px; left: 1554.82px; top: 852px;">-0.14</span>
<span class="t tu" style="letter-spacing: -0.29px; top: 854px; left: 1599.22px;">USD</span>
<div class="abs ti g" style="top:922px"></div>
<svg style="left:1225.1px;top:935.8px" width="14.2" height="14.2" viewBox="0 0 16 16" fill="#22b8a9" stroke="#22b8a9" stroke-width=".35"><path fill-rule="evenodd" d="M1 11.500a.5.500 0 0 0 .5.500h11.793l-3.147 3.146a.5.500 0 0 0 .708.708l4-4a.5.500 0 0 0 0-.708l-4-4a.5.500 0 0 0-.708.708L13.293 11H1.500a.5.500 0 0 0-.5.500m14-7a.5.500 0 0 1-.5.500H2.707l3.147 3.146a.5.500 0 1 1-.708.708l-4-4a.5.500 0 0 1 0-.708l4-4a.5.500 0 1 1 .708.708L2.707 4H14.500a.5.500 0 0 1 .5.500"></path></svg>
<span class="t tn" style="letter-spacing: 0.064px; top: 929px; left: 1269.25px;">Make Payment</span>
<span class="t td" style="letter-spacing: 0.194px; top: 948px; left: 1269.12px;">Balance credited from payment</span>
<span class="t ta" style="letter-spacing: -1.08px; left: 1555.46px; top: 934px;">+150</span>
<span class="t tu" style="letter-spacing: -0.29px; top: 936px; left: 1599.22px;">USD</span>
<div class="abs ti" style="top:1004px"></div>
<svg style="left:1225.1px;top:1017.8px" width="14.2" height="14.2" viewBox="0 0 16 16" fill="#ef4f7c" stroke="#ef4f7c" stroke-width=".35"><path fill-rule="evenodd" d="M3.500 6a.5.500 0 0 0-.5.500v8a.5.500 0 0 0 .5.500h9a.5.500 0 0 0 .5-.5v-8a.5.500 0 0 0-.5-.5h-2a.5.500 0 0 1 0-1h2A1.500 1.500 0 0 1 14 6.500v8a1.500 1.500 0 0 1-1.500 1.500h-9A1.500 1.500 0 0 1 2 14.500v-8A1.500 1.500 0 0 1 3.500 5h2a.5.500 0 0 1 0 1z"></path><path fill-rule="evenodd" d="M7.646.146a.5.500 0 0 1 .708 0l3 3a.5.500 0 0 1-.708.708L8.500 1.707V10.500a.5.500 0 0 1-1 0V1.707L5.354 3.854a.5.500 0 1 1-.708-.708z"></path></svg>
<span class="t tn" style="letter-spacing: -0.031px; top: 1011px; left: 1269.25px;">Payout</span>
<span class="t td" style="letter-spacing: 0.197px; top: 1030px; left: 1269.96px;">Withdraw via Perfect Money</span>
<span class="t ta" style="letter-spacing: -0.698px; left: 1558.54px; top: 1016px;">-150</span>
<span class="t tu" style="letter-spacing: -0.29px; top: 1018px; left: 1599.22px;">USD</span>
<div class="abs ti" style="top:1086px"></div>
<svg style="left:1225.1px;top:1099.8px" width="14.2" height="14.2" viewBox="0 0 16 16" fill="#ef4f7c" stroke="#ef4f7c" stroke-width=".35"><path fill-rule="evenodd" d="M1 11.500a.5.500 0 0 0 .5.500h11.793l-3.147 3.146a.5.500 0 0 0 .708.708l4-4a.5.500 0 0 0 0-.708l-4-4a.5.500 0 0 0-.708.708L13.293 11H1.500a.5.500 0 0 0-.5.500m14-7a.5.500 0 0 1-.5.500H2.707l3.147 3.146a.5.500 0 1 1-.708.708l-4-4a.5.500 0 0 1 0-.708l4-4a.5.500 0 1 1 .708.708L2.707 4H14.500a.5.500 0 0 1 .5.500"></path></svg>
<span class="t tn" style="letter-spacing: 0.064px; top: 1093px; left: 1269.25px;">Make Payment</span>
<span class="t td" style="letter-spacing: 0.206px; top: 1112px; left: 1269.56px;">Charge deducted from payment</span>
<span class="t ta" style="letter-spacing: 0.472px; left: 1549.54px; top: 1098px;">-0.44</span>
<span class="t tu" style="letter-spacing: -0.29px; top: 1100px; left: 1599.22px;">USD</span>

</div>


</body></html>
